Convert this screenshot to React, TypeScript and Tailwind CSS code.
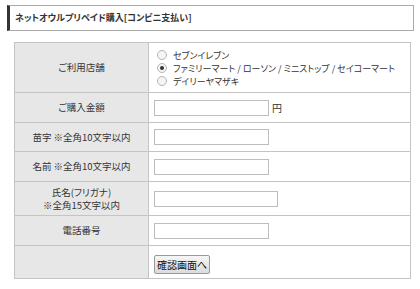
const jp = "font-['Noto_Sans_CJK_JP','Noto_Sans',sans-serif] [font-feature-settings:'palt']";

function Radio({ checked, label }: { checked?: boolean; label: string }) {
  return (
    <div className="flex items-center h-[13px] whitespace-nowrap">
      <span className="ml-[3px] w-[10px] h-[10px] shrink-0 rounded-full border border-[#b5b5b5] bg-[#f4f4f4] flex items-center justify-center">
        {checked && <span className="w-[4px] h-[4px] rounded-full bg-[#333]" />}
      </span>
      <span className="ml-[6px] text-[9px] leading-none">{label}</span>
    </div>
  );
}

function Field({ w = "w-[115px]" }: { w?: string }) {
  return <div className={`${w} h-[16px] border border-[#bdbdbd] bg-white`} />;
}

function Label({ children }: { children: React.ReactNode }) {
  return (
    <td className="w-[134px] bg-[#e7e7e7] border border-[#c4c4c4] text-center text-[9.5px] leading-[13px] align-middle whitespace-nowrap">
      {children}
    </td>
  );
}

function Cell({ children }: { children?: React.ReactNode }) {
  return <td className="border border-[#c4c4c4] bg-white pl-[5px] align-middle">{children}</td>;
}

export default function App() {
  return (
    <div className={`w-[420px] h-[289px] bg-white text-[#333] ${jp}`}>
      {/* Title */}
      <div className="pt-[5px] pl-[7px] pr-[6px]">
        <div className="h-[26px] border border-[#aaa] border-l-[3px] border-l-[#333] flex items-center pl-[5px]">
          <span className="text-[9px] font-bold">ネットオウルプリペイド購入[コンビニ支払い]</span>
        </div>
      </div>

      {/* Form */}
      <div className="pt-[11px] pl-[14px]">
        <table className="w-[397px] border-collapse table-fixed">
          <tbody>
            <tr className="h-[50px]">
              <Label>ご利用店舗</Label>
              <Cell>
                <div className="flex flex-col pt-[1px]">
                  <Radio label="セブンイレブン" />
                  <Radio checked label="ファミリーマート / ローソン / ミニストップ / セイコーマート" />
                  <Radio label="デイリーヤマザキ" />
                </div>
              </Cell>
            </tr>
            <tr className="h-[30px]">
              <Label>ご購入金額</Label>
              <Cell>
                <div className="flex items-center gap-[3px]">
                  <Field />
                  <span className="text-[10px]">円</span>
                </div>
              </Cell>
            </tr>
            <tr className="h-[29px]">
              <Label>苗字 ※全角10文字以内</Label>
              <Cell><Field /></Cell>
            </tr>
            <tr className="h-[30px]">
              <Label>名前 ※全角10文字以内</Label>
              <Cell><Field /></Cell>
            </tr>
            <tr className="h-[34px]">
              <Label>
                <div>氏名(フリガナ)</div>
                <div>※全角15文字以内</div>
              </Label>
              <Cell><Field w="w-[124px]" /></Cell>
            </tr>
            <tr className="h-[30px]">
              <Label>電話番号</Label>
              <Cell><Field /></Cell>
            </tr>
            <tr className="h-[33px]">
              <Label>{""}</Label>
              <Cell>
                <button className="h-[19px] px-[2px] border border-[#9a9a9a] rounded-[2px] bg-gradient-to-b from-[#f6f6f6] to-[#dcdcdc] text-[10px] leading-none text-[#111]">
                  確認画面へ
                </button>
              </Cell>
            </tr>
          </tbody>
        </table>
      </div>
    </div>
  );
}
